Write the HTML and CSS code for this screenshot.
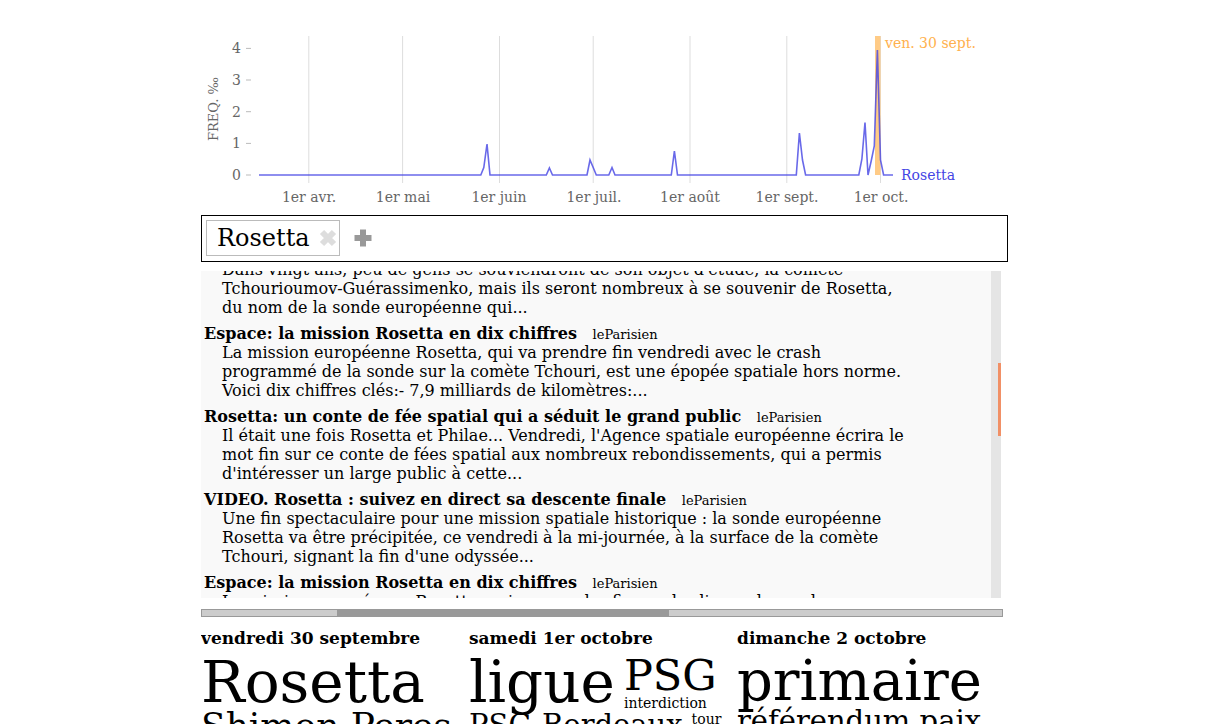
FILE: index.html
```html
<!DOCTYPE html>
<html lang="fr">
<head>
<meta charset="utf-8">
<title>Rosetta</title>
<link rel="stylesheet" href="styles.css">
</head>
<body>
<main class="page">
  <svg class="chart" viewBox="201 0 810 215" role="img" aria-label="Fréquence de Rosetta">
    <g class="grid">
      <path d="M308.8 36V183M402.6 36V183M499.5 36V183M593.2 36V183M690 36V183M786.8 36V183M880.5 36V183"/>
    </g>
    <g class="ticks">
      <path d="M246 48.4h5M246 80h5M246 111.7h5M246 143.4h5M246 175h5"/>
    </g>
    <g class="label end">
      <text x="241" y="53">4</text>
      <text x="241" y="85">3</text>
      <text x="241" y="117">2</text>
      <text x="241" y="148">1</text>
      <text x="241" y="180">0</text>
    </g>
    <text class="axis-title" transform="translate(218 109) rotate(-90)">FREQ. ‰</text>
    <g class="label mid">
      <text x="309" y="202">1er avr.</text>
      <text x="403" y="202">1er mai</text>
      <text x="499" y="202">1er juin</text>
      <text x="594" y="202">1er juil.</text>
      <text x="690" y="202">1er août</text>
      <text x="787" y="202">1er sept.</text>
      <text x="881" y="202">1er oct.</text>
    </g>
    <rect class="day" x="875" y="36" width="5.5" height="139"/>
    <path class="series" d="M259 175H480.8L483.8 167.5L487 144L490 175H546.3L549.4 168L552.5 175H587L590 160L593.2 167.5L596.3 175H608.8L612 167.5L615 175H671.3L674.4 151L677.5 175H796.3L799.4 133L802.5 160L805.6 175H858.8L861.9 159L865 122.5L868 175L871.2 161L874.3 146L877.4 50L880.5 160L883.6 175H893"/>
    <text class="label day-label" x="885" y="48">ven. 30 sept.</text>
    <text class="label series-label" x="901" y="180">Rosetta</text>
  </svg>

  <div class="query">
    <span class="chip">Rosetta
      <button class="icon remove" type="button" aria-label="Supprimer">
        <svg width="18" height="18" viewBox="0 0 18 18"><path d="M3 3L15 15M15 3L3 15"/></svg>
      </button>
    </span>
    <button class="icon add" type="button" aria-label="Ajouter">
      <svg width="18" height="18" viewBox="0 0 18 18"><path d="M9 .5V17.5M.5 9H17.5"/></svg>
    </button>
  </div>

  <section class="news">
    <div class="articles">
      <article>
        <p>Dans vingt ans, peu de gens se souviendront de son objet d'étude, la comète Tchourioumov-Guérassimenko, mais ils seront nombreux à se souvenir de Rosetta, du nom de la sonde européenne qui...</p>
      </article>
      <article>
        <h3>Espace: la mission Rosetta en dix chiffres <span class="source">leParisien</span></h3>
        <p>La mission européenne Rosetta, qui va prendre fin vendredi avec le crash programmé de la sonde sur la comète Tchouri, est une épopée spatiale hors norme. Voici dix chiffres clés:- 7,9 milliards de kilomètres:...</p>
      </article>
      <article>
        <h3>Rosetta: un conte de fée spatial qui a séduit le grand public <span class="source">leParisien</span></h3>
        <p>Il était une fois Rosetta et Philae... Vendredi, l'Agence spatiale européenne écrira le mot fin sur ce conte de fées spatial aux nombreux rebondissements, qui a permis d'intéresser un large public à cette...</p>
      </article>
      <article>
        <h3>VIDEO. Rosetta : suivez en direct sa descente finale <span class="source">leParisien</span></h3>
        <p>Une fin spectaculaire pour une mission spatiale historique : la sonde européenne Rosetta va être précipitée, ce vendredi à la mi-journée, à la surface de la comète Tchouri, signant la fin d'une odyssée...</p>
      </article>
      <article>
        <h3>Espace: la mission Rosetta en dix chiffres <span class="source">leParisien</span></h3>
        <p>La mission européenne Rosetta, qui va prendre fin vendredi avec le crash</p>
      </article>
    </div>
    <div class="track"><div class="thumb"></div></div>
  </section>

  <div class="hscroll"><div class="hthumb"></div></div>

  <section class="days">
    <div class="column">
      <h2>vendredi 30 septembre</h2>
      <div class="row"><span class="w58">Rosetta</span></div>
      <div class="row"><span class="w36">Shimon Peres</span></div>
    </div>
    <div class="column">
      <h2>samedi 1er octobre</h2>
      <div class="row">
        <span class="w58">ligue</span>
        <div class="stack"><span class="w43">PSG</span><span class="w14">interdiction</span></div>
      </div>
      <div class="row"><span class="w29">PSG-Bordeaux</span><span class="w14">tour</span></div>
    </div>
    <div class="column">
      <h2>dimanche 2 octobre</h2>
      <div class="row"><span class="w56">primaire</span></div>
      <div class="row"><span class="w29">référendum paix</span></div>
    </div>
  </section>
</main>
</body>
</html>
```
FILE: styles.css
```css
* { box-sizing: border-box; }

body {
  margin: 0;
  background: #fff;
  color: #000;
  font-family: "DejaVu Serif", serif;
  font-size: 16px;
  line-height: 19px;
}

h2, h3, p { margin: 0; font-size: 16px; }

.page {
  display: flex;
  flex-direction: column;
  height: 100vh;
  max-width: 810px;
  margin: 0 auto;
  overflow: hidden;
}

.chart { display: block; width: 100%; flex: none; }
.chart path { fill: none; }
.grid { stroke: #ddd; }
.ticks { stroke: #bbb; }
.label { font-size: 14px; fill: #666; }
.end { text-anchor: end; }
.mid { text-anchor: middle; }
.axis-title { font-size: 13px; fill: #666; text-anchor: middle; }
.day { fill: #ffcb86; }
.series { stroke: #4444e4; stroke-width: 1.6; stroke-opacity: 0.8; }
.day-label { fill: #ffb14e; }
.series-label { fill: #4444e4; }

.query {
  display: flex;
  flex: none;
  align-items: center;
  gap: 14px;
  margin-right: 3px;
  padding: 4px 4px 5px;
  border: 1px solid #000;
}

.chip {
  display: flex;
  align-items: center;
  gap: 9px;
  padding: 3px 2px 3px 10px;
  border: 1px solid #bbb;
  font-size: 24px;
  line-height: 28px;
}

.icon {
  display: flex;
  padding: 0;
  border: 0;
  background: none;
  cursor: pointer;
}
.icon path { fill: none; stroke: currentColor; stroke-width: 6; }
.remove { color: #ddd; }
.add { color: #999; }

.news {
  display: flex;
  flex: none;
  height: 327px;
  margin: 9px 10px 0 0;
  background: #f9f9f9;
  overflow: hidden;
}

.articles {
  display: flex;
  flex: 1;
  flex-direction: column;
  gap: 7px;
  margin-top: -11px;
  padding-left: 3px;
}
.articles p { max-width: 702px; padding-left: 18px; }
.source {
  margin-left: 10px;
  font-size: 13px;
  font-weight: normal;
  line-height: 13px;
}

.track {
  width: 10px;
  padding: 92px 0 0 7px;
  background: #e5e5e5;
}
.thumb { height: 73px; background: #f19066; }

.hscroll {
  flex: none;
  height: 8px;
  margin: 11px 8px 0 0;
  border: 1px solid #999;
  background: #ccc;
}
.hthumb { width: 332px; height: 6px; margin-left: 135px; background: #999; }

.days {
  display: grid;
  flex: 1;
  grid-template-columns: repeat(3, 268px);
  min-height: 0;
  margin-top: 12px;
  overflow: hidden;
}
.days h2 { margin-bottom: 7px; font-size: 17px; }

.row { display: flex; gap: 9px; white-space: nowrap; }
.stack { display: flex; flex-direction: column; }
.w58 { font-size: 58px; line-height: 54px; }
.w56 { font-size: 56px; line-height: 52px; }
.w43 { font-size: 43px; line-height: 40px; }
.w36 { font-size: 36px; line-height: 34px; }
.w29 { font-size: 29px; line-height: 28px; }
.w14 { font-size: 14px; line-height: 16px; }
```
